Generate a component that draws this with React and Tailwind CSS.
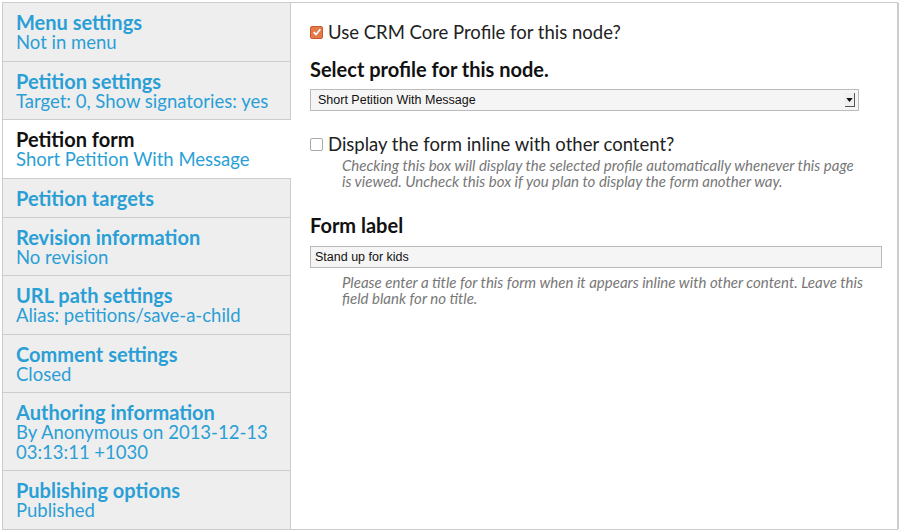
const tabs = [
  { title: "Menu settings", summary: "Not in menu" },
  { title: "Petition settings", summary: "Target: 0, Show signatories: yes" },
  { title: "Petition form", summary: "Short Petition With Message", active: true },
  { title: "Petition targets" },
  { title: "Revision information", summary: "No revision" },
  { title: "URL path settings", summary: "Alias: petitions/save-a-child" },
  { title: "Comment settings", summary: "Closed" },
  { title: "Authoring information", summary: "By Anonymous on 2013-12-13 03:13:11 +1030" },
  { title: "Publishing options", summary: "Published" },
];

function CheckBox({ checked }) {
  if (checked) {
    return (
      <span className="flex h-[13px] w-[13px] items-center justify-center rounded-[2px] border border-[#c85a2c] bg-[#e4794a]">
        <svg viewBox="0 0 12 12" className="h-[10px] w-[10px]">
          <path d="M2 6.2 L4.8 9 L10 2.8" fill="none" stroke="#fff" strokeWidth="2" />
        </svg>
      </span>
    );
  }
  return <span className="block h-[13px] w-[13px] rounded-[2px] border border-[#a9a9a9] bg-white" />;
}

export default function App() {
  return (
    <div className="h-[531px] w-[901px] bg-white p-[2px] font-['Lato',sans-serif]">
      <div className="flex h-[528px] w-[896px] border border-[#cccccc]">
        <ul className="w-[288px] shrink-0 bg-[#eeeeee]">
          {tabs.map((t) => (
            <li
              key={t.title}
              className={
                t.active
                  ? "border-b border-[#cccccc] bg-white px-[13px] pt-[8px] pb-[8px]"
                  : "border-r border-b border-[#cccccc] px-[13px] pt-[8px] pb-[8px] last:border-b-0"
              }
            >
              <div
                className={
                  t.active
                    ? "text-[20px] leading-[22px] font-bold text-[#111111]"
                    : "text-[20px] leading-[22px] font-bold text-[#2a9fd6]"
                }
              >
                {t.title}
              </div>
              {t.summary && (
                <div className="text-[18.5px] leading-[19.5px] text-[#2a9fd6]">{t.summary}</div>
              )}
            </li>
          ))}
        </ul>
        <div className="flex-1 border-r border-[#cccccc] pl-[19px] pr-[16px] pt-[18px]">
          <label className="flex items-center gap-[5px] text-[18.5px] leading-[22px] text-[#222222]">
            <CheckBox checked />
            Use CRM Core Profile for this node?
          </label>
          <h3 className="mt-[15px] text-[20px] leading-[22px] font-bold text-[#111111]">
            Select profile for this node.
          </h3>
          <div className="mt-[9px] flex h-[22px] w-[549px] items-center justify-between border border-[#bbbbbb] bg-[#f5f5f5] pl-[7px] pr-[3px] font-['Liberation_Sans',sans-serif] text-[12.5px] text-[#111111]">
            <span>Short Petition With Message</span>
            <span className="flex h-[14px] w-[10px] items-center justify-center border-r border-b border-[#555555] bg-[#f0f0f0]">
              <svg viewBox="0 0 8 5" className="h-[4px] w-[7px]">
                <path d="M0 0 H8 L4 5 Z" fill="#111" />
              </svg>
            </span>
          </div>
          <label className="mt-[22px] flex items-center gap-[5px] text-[18.5px] leading-[22px] text-[#222222]">
            <CheckBox />
            Display the form inline with other content?
          </label>
          <p className="mt-[2px] w-[556px] pl-[32px] text-[15px] leading-[16px] italic text-[#777777]">
            Checking this box will display the selected profile automatically whenever this page is viewed. Uncheck this box if you plan to display the form another way.
          </p>
          <h3 className="mt-[25px] text-[20px] leading-[22px] font-bold text-[#111111]">Form label</h3>
          <div className="mt-[10px] flex h-[22px] w-[572px] items-center border border-[#bbbbbb] bg-[#f5f5f5] px-[4px] font-['Liberation_Sans',sans-serif] text-[12.5px] text-[#111111]">
            Stand up for kids
          </div>
          <p className="mt-[6px] w-[556px] pl-[32px] text-[15px] leading-[16px] italic text-[#777777]">
            Please enter a title for this form when it appears inline with other content. Leave this field blank for no title.
          </p>
        </div>
      </div>
    </div>
  );
}
